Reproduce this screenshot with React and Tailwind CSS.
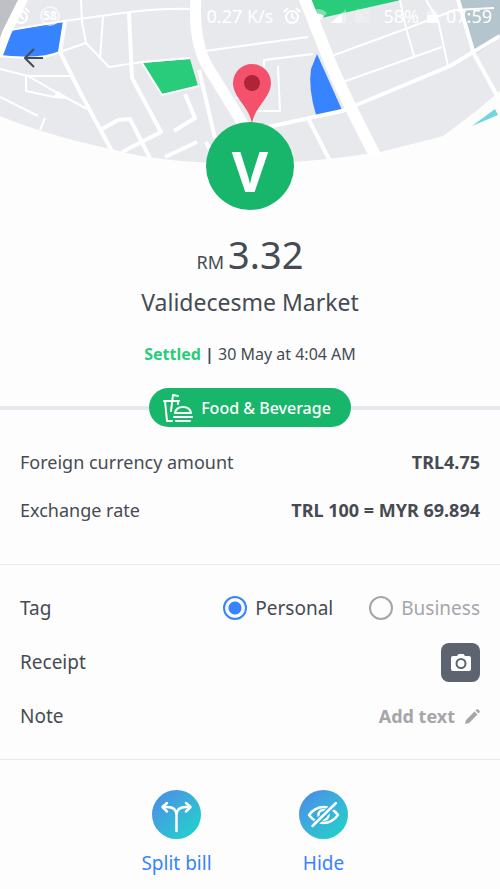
import React, { useState } from 'react'

function MapHeader() {
  return (
    <svg viewBox="0 0 500 168" className="block w-full" role="img" aria-label="Map">
      <path
        d="M0 0H500V91L475 112L443 136Q425 141 380 152Q310 163 250 164Q160 163 115 150Q45 135 0 116Z"
        fill="#e8e9ed"
      />
      <path d="M0 0H20L0 40Z" fill="#bfc0c5" />
      <path d="M458 0H500V38L475 54Z" fill="#b5c5cd" />
      <path d="M12 30L63 22L59 52Q45 58 30 57L2 56Z" fill="#3883ff" />
      <path d="M142 63L190 59L198 86L162 94Z" fill="#29cc7a" />
      <path d="M308 0H401L317 19Z" fill="#29cc7a" />
      <path d="M317 54L342 110L316 115Q308 88 311 69Z" fill="#3883ff" />
      <path d="M472 126L495 109L498 115Z" fill="#6fd6df" />
      <path d="M53 97L58 91L68 98Z" fill="#fff" />
      <g fill="none" stroke="#fff" strokeLinejoin="round">
        <path d="M196 -2Q193 38 206 64L248 132" strokeWidth="11" />
        <path d="M302 -8L330 62Q345 98 376 157" strokeWidth="12" />
        <path d="M24 -2L7 32L-2 56" strokeWidth="9" />
        <g strokeWidth="4">
          <path d="M65 21L60 52L80 92L113 153" />
          <path d="M129 13L132 78L161 132L122 152" />
          <path d="M102 129L118 120L130 119L150 158" />
          <path d="M199 70L215 138M206 142L210 150" />
          <path d="M185 94L195 118L174 131M165 157L197 142" />
          <path d="M268 127L342 111L450 66L500 36" />
          <path d="M309 120L330 161M457 -4L474 54L500 101" />
        </g>
        <g strokeWidth="2">
          <path d="M10 30L64 21L130 12Q165 8 194 9M81 0L82 22L86 43L109 67L142 62L190 58" />
          <path d="M60 52L86 43M103 17L100 59M0 56Q40 61 60 52" />
          <path d="M0 69L28 76L73 76M28 76L54 91L87 109M26 76L26 91L54 97L68 98" />
          <path d="M0 97L38 116M45 118L40 130M205 51L308 37M313 54L264 60L264 80M278 66L280 111L256 111M235 98L242 98" />
          <path d="M329 57L408 28L455 10L494 8M340 83L442 47M400 0L406 28L414 56M426 0L438 20L448 66" />
          <path d="M142 63L162 95L199 86" />
        </g>
      </g>
    </svg>
  )
}

function Clock() {
  return (
    <svg viewBox="0 0 18 18" className="size-[18px]" fill="none" stroke="currentColor" strokeWidth="2">
      <circle cx="9" cy="10" r="6" />
      <path d="M9 6V10L12 12M1 5L5 1M17 5L13 1" />
    </svg>
  )
}

function StatusBar() {
  return (
    <div className="flex h-8 items-center justify-between pr-2 pl-3 text-lg text-white">
      <div className="flex items-center gap-2.5">
        <Clock />
        <span className="flex size-5 items-center justify-center rounded-full border-2 border-white/60 text-[12px] font-bold">58</span>
      </div>
      <div className="flex items-center">
        <span>0.27 K/s</span>
        <span className="ml-2.5">
          <Clock />
        </span>
        <svg viewBox="0 0 62 16" className="ml-2 h-4 w-[62px]" fill="currentColor">
          <path d="M0 5Q9 -3 18 5L9 15Z" opacity=".4" />
          <path d="M3 8Q9 3 15 8L9 15Z" />
          <path d="M22 15L37 1V15Z" opacity=".35" />
          <path d="M22 15L33 5V15Z" />
          <path d="M46 3L49 0L61 13V15H46ZM53 3L61 1V9Z" opacity=".25" />
        </svg>
        <span className="ml-3">58%</span>
        <svg viewBox="0 0 11 16" className="ml-2 h-4 w-[11px]" fill="currentColor">
          <path d="M3 1H8V3H11V7H0V3H3Z" opacity=".35" />
          <path d="M0 7H11V15H0Z" />
        </svg>
        <span className="ml-2">07:59</span>
      </div>
    </div>
  )
}

function FoodIcon() {
  return (
    <svg
      viewBox="0 0 30 30"
      className="size-[30px]"
      fill="none"
      stroke="currentColor"
      strokeWidth="2"
      strokeLinecap="round"
      strokeLinejoin="round"
      aria-hidden="true"
    >
      <path d="M1 8H16M2 8L4 28H9M15 8V11M8 18L10 2L15 3" />
      <path d="M12 20Q13 14 20 14Q27 14 28 20ZM11 24H29M13 28H27" />
    </svg>
  )
}

function CameraIcon() {
  return (
    <svg viewBox="0 0 20 17" className="w-5" aria-hidden="true">
      <path d="M2 2H6L7.500 0H12.500L14 2H18Q20 2 20 4V15Q20 17 18 17H2Q0 17 0 15V4Q0 2 2 2Z" fill="#fff" />
      <circle cx="10" cy="9.500" r="4.500" fill="none" stroke="#5d6470" strokeWidth="2" />
    </svg>
  )
}

function PencilIcon() {
  return (
    <svg viewBox="0 0 15 15" className="size-[15px]" fill="currentColor" aria-hidden="true">
      <path d="M0 15L1 11L9.500 2.500L12.500 5.500L4 14ZM10.500 1.500L11.500 .5Q12.500 -.3 13.500 .7L14.400 1.600Q15.300 2.600 14.400 3.600L13.500 4.500Z" />
    </svg>
  )
}

function SplitIcon() {
  return (
    <svg viewBox="0 0 49 49" className="size-full" fill="none" stroke="currentColor" strokeWidth="2.500" strokeLinecap="round" strokeLinejoin="round">
      <path d="M24.500 41V25Q24.500 17 15 17H11M24.500 25Q24.500 17 34 17H38" />
      <path d="M15 13L10.500 17L15 21.500M34 13L38.500 17L34 21.500" />
    </svg>
  )
}

function HideIcon() {
  return (
    <svg viewBox="0 0 49 49" className="size-full" fill="none" stroke="currentColor" strokeWidth="2.500" strokeLinecap="round" strokeLinejoin="round">
      <path d="M10 25Q16 17 24.500 17Q33 17 39 25Q33 33 24.500 33Q16 33 10 25Z" />
      <circle cx="24.500" cy="25" r="5" />
      <path d="M33 17L17 33" stroke="#30aed8" strokeWidth="6" strokeLinecap="butt" />
      <path d="M37 13L13.500 36" />
    </svg>
  )
}

function AmountRow({ label, children }) {
  return (
    <div className="flex items-center justify-between">
      <dt>{label}</dt>
      <dd className="font-bold">{children}</dd>
    </div>
  )
}

function TagOption({ value, tag, onChange }) {
  const checked = tag === value
  return (
    <label className={checked ? 'flex items-center gap-2' : 'flex items-center gap-2 text-[#a5a6aa]'}>
      <input
        type="radio"
        name="tag"
        value={value}
        checked={checked}
        onChange={() => onChange(value)}
        className="size-6 appearance-none rounded-full border-2 border-[#a5a6aa] checked:border-[#3883ff] checked:bg-[radial-gradient(circle,#3883ff_6px,transparent_7px)]"
      />
      {value}
    </label>
  )
}

function Action({ label, children }) {
  return (
    <button type="button" className="flex w-[147px] flex-col items-center gap-2.5 text-[19px] leading-7 text-[#3883ff]">
      <span className="size-[49px] rounded-full bg-linear-to-br from-[#4b86ea] to-[#12d8c4] text-white">{children}</span>
      {label}
    </button>
  )
}

export default function App() {
  const [tag, setTag] = useState('Personal')

  return (
    <main className="min-h-screen bg-[#fdfdfd] font-['Noto_Sans',sans-serif] text-lg text-[#464b53]">
      <header className="relative">
        <MapHeader />
        <div className="absolute inset-x-0 top-0">
          <StatusBar />
          <button type="button" aria-label="Back" className="mt-4 ml-6 block">
            <svg viewBox="0 0 20 20" className="size-5" fill="none" stroke="currentColor" strokeWidth="2">
              <path d="M10 1L1 10L10 19M1 10H19" />
            </svg>
          </button>
        </div>
      </header>

      <section className="relative -mt-26 flex flex-col items-center">
        <svg viewBox="0 0 44 60" className="w-11" aria-hidden="true">
          <path d="M24 60C22 43 5 34 5 19A19 19 0 0 1 43 19C43 34 26 43 24 60Z" fill="#f4516c" />
          <circle cx="24" cy="19" r="8" fill="#b02438" />
        </svg>
        <div className="-mt-0.5 flex size-[88px] items-center justify-center rounded-full bg-[#17b66a] pt-2 text-[56px] leading-none font-bold text-white">
          V
        </div>
        <p className="mt-4 flex items-baseline gap-1">
          <span>RM</span>
          <span className="text-[38px] leading-14">3.32</span>
        </p>
        <h1 className="mt-1 text-[23px] leading-8">Validecesme Market</h1>
        <p className="mt-6 text-base">
          <b className="text-[#29cc7a]">Settled</b> <b>|</b> 30 May at 4:04 AM
        </p>
      </section>

      <div className="mt-[22px] flex items-center">
        <span className="h-1 flex-1 bg-[#e8e9ed]" />
        <span className="flex h-[39px] items-center gap-2 rounded-full bg-[#17b66a] pr-5 pl-3.5 text-base font-medium text-white">
          <FoodIcon />
          Food &amp; Beverage
        </span>
        <span className="h-1 flex-1 bg-[#e8e9ed]" />
      </div>

      <dl className="flex flex-col gap-5 border-b border-[#e8e9eb] px-5 pt-[21px] pb-10">
        <AmountRow label="Foreign currency amount">TRL4.75</AmountRow>
        <AmountRow label="Exchange rate">TRL 100 = MYR 69.894</AmountRow>
      </dl>

      <section className="border-b border-[#e8e9eb] px-5 py-4 text-[19px] leading-7">
        <div role="radiogroup" aria-labelledby="tag-label" className="flex h-[54px] items-center justify-between">
          <span id="tag-label">Tag</span>
          <div className="flex gap-9">
            <TagOption value="Personal" tag={tag} onChange={setTag} />
            <TagOption value="Business" tag={tag} onChange={setTag} />
          </div>
        </div>
        <div className="flex h-[54px] items-center justify-between">
          <span>Receipt</span>
          <button type="button" aria-label="Add receipt photo" className="flex size-[39px] items-center justify-center rounded-lg bg-[#5d6470]">
            <CameraIcon />
          </button>
        </div>
        <div className="flex h-[54px] items-center justify-between">
          <span>Note</span>
          <button type="button" className="flex items-center gap-2.5 text-lg font-bold text-[#a5a6aa]">
            Add text
            <PencilIcon />
          </button>
        </div>
      </section>

      <footer className="flex justify-center pt-[30px]">
        <Action label="Split bill">
          <SplitIcon />
        </Action>
        <Action label="Hide">
          <HideIcon />
        </Action>
      </footer>
    </main>
  )
}
